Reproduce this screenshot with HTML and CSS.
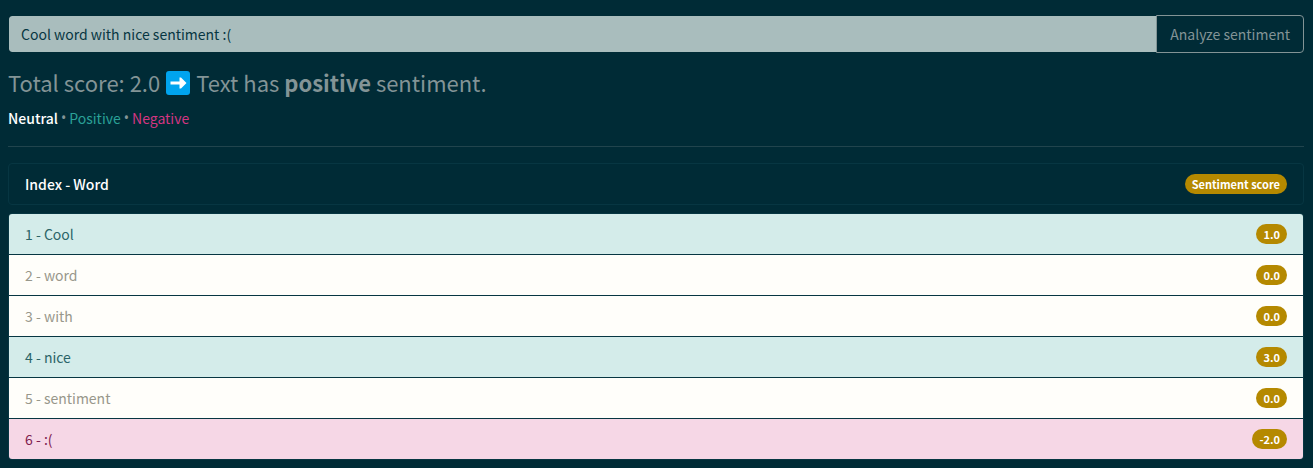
FILE: index.html
```html
<!DOCTYPE html>
<html lang="en">
<head>
<meta charset="utf-8">
<title>Sentiment analysis</title>
<link rel="stylesheet" href="styles.css">
</head>
<body>
<main class="page">
  <form class="search">
    <input class="search-input" type="text" aria-label="Text to analyze" value="Cool word with nice sentiment :(">
    <button class="search-button" type="button">Analyze sentiment</button>
  </form>
  <h1 class="result">
    <span>Total score: 2.0</span>
    <svg class="arrow" viewBox="0 0 24 24" role="img" aria-label="Right arrow"><rect width="24" height="24" rx="3" fill="#00a4ef"/><path d="M4.500 10.500h9V6.500h1.500l5.500 5.500-5.500 5.500h-1.500v-4h-9z" fill="#fff"/></svg>
    <span>Text has <strong>positive</strong> sentiment.</span>
  </h1>
  <p class="legend"><span class="neutral">Neutral</span><span class="dot">•</span><span class="positive">Positive</span><span class="dot">•</span><span class="negative">Negative</span></p>
  <hr class="divider">
  <div class="list-header"><span>Index - Word</span><span class="badge">Sentiment score</span></div>
  <ul class="words">
    <li class="word word-positive"><span>1 - Cool</span><span class="badge">1.0</span></li>
    <li class="word"><span>2 - word</span><span class="badge">0.0</span></li>
    <li class="word"><span>3 - with</span><span class="badge">0.0</span></li>
    <li class="word word-positive"><span>4 - nice</span><span class="badge">3.0</span></li>
    <li class="word"><span>5 - sentiment</span><span class="badge">0.0</span></li>
    <li class="word word-negative"><span>6 - :(</span><span class="badge">-2.0</span></li>
  </ul>
</main>
</body>
</html>
```
FILE: styles.css
```css
* {
  box-sizing: border-box;
}

body {
  margin: 0;
  background: #002b36;
  color: #839496;
  font-family: "Noto Sans CJK SC", "Noto Sans", sans-serif;
  font-size: 14px;
  line-height: 24px;
}

.page {
  padding: 15px 9px 8px 8px;
}

.search {
  display: flex;
}

.search-input,
.search-button {
  height: 38px;
  margin: 0;
  padding: 6px 12px;
  font: inherit;
}

.search-input {
  flex: 1;
  min-width: 0;
  border: 1px solid #002b36;
  border-right: 0;
  border-radius: 4px 0 0 4px;
  background: #a9bdbd;
  background-clip: padding-box;
  color: #073642;
}

.search-button {
  padding: 6px 13px;
  border: 1px solid #839496;
  border-radius: 0 4px 4px 0;
  background: transparent;
  color: #839496;
}

.result {
  display: flex;
  align-items: center;
  gap: 6px;
  margin: 15px 0 9px;
  font-size: 22px;
  font-weight: 400;
  line-height: 29px;
}

.arrow {
  width: 24px;
  height: 24px;
}

.legend {
  display: flex;
  gap: 3px;
  margin: 0;
}

.dot {
  font-family: "Noto Sans", sans-serif;
}

.neutral {
  color: #fff;
  font-weight: 500;
}

.positive {
  color: #2aa198;
}

.negative {
  color: #d33682;
}

.divider {
  height: 1px;
  margin: 16px 0;
  border: 0;
  background: #21444d;
}

.list-header,
.word {
  display: flex;
  align-items: center;
  justify-content: space-between;
  padding: 8px 16px;
}

.list-header {
  margin-bottom: 8px;
  border: 1px solid #073642;
  border-radius: 4px;
  color: #fff;
  font-weight: 500;
}

.words {
  margin: 0;
  padding: 0;
  list-style: none;
  border: 1px solid #073642;
  border-radius: 4px;
  overflow: hidden;
}

.word {
  background: #fffefa;
  color: #98978b;
}

.word + .word {
  border-top: 1px solid #073642;
}

.word-positive {
  background: #d4ecea;
  color: #2b6468;
}

.word-negative {
  background: #f6d7e6;
  color: #7f204e;
}

.badge {
  padding: 4px 7px;
  border-radius: 10px;
  background: #b58900;
  color: #fff;
  font-size: 11px;
  font-weight: 700;
  line-height: 12px;
}
```
